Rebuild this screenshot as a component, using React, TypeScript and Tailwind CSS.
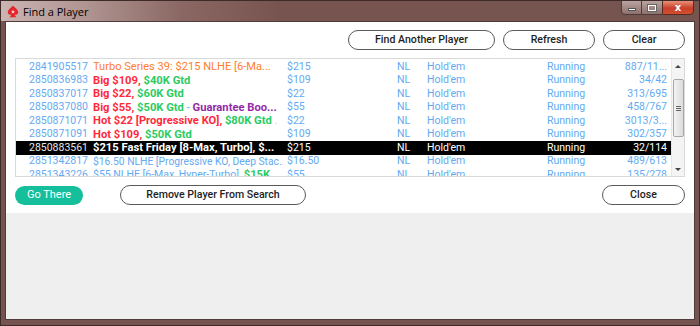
import React from "react";

type Seg = { t: string; c: string; b?: boolean; s?: string };
type Row = {
  id: string;
  name: Seg[];
  buyIn: string;
  players: string;
  selected?: boolean;
};

const BLUE = "text-[#64aaf2]";
const RED = "text-[#ff2a3c]";
const GREEN = "text-[#2bcb62]";
const ORANGE = "text-[#ff7d2e]";
const PURPLE = "text-[#9428a8]";

const rows: Row[] = [
  { id: "2841905517", name: [{ t: "Turbo Series 39: $215 NLHE [6-Ma...", c: ORANGE, s: "text-[11.1px]" }], buyIn: "$215", players: "887/11..." },
  { id: "2850836983", name: [{ t: "Big $109, ", c: RED, b: true }, { t: "$40K Gtd", c: GREEN, b: true }], buyIn: "$109", players: "34/42" },
  { id: "2850837017", name: [{ t: "Big $22, ", c: RED, b: true }, { t: "$60K Gtd", c: GREEN, b: true }], buyIn: "$22", players: "313/695" },
  {
    id: "2850837080",
    name: [
      { t: "Big $55, ", c: RED, b: true },
      { t: "$50K Gtd", c: GREEN, b: true },
      { t: " - ", c: BLUE },
      { t: "Guarantee Boo...", c: PURPLE, b: true },
    ],
    buyIn: "$55",
    players: "458/767",
  },
  {
    id: "2850871071",
    name: [
      { t: "Hot $22 [Progressive KO], ", c: RED, b: true },
      { t: "$80K Gtd", c: GREEN, b: true },
      { t: " .", c: "text-[#b8d6f6]" },
    ],
    buyIn: "$22",
    players: "3013/3...",
  },
  { id: "2850871091", name: [{ t: "Hot $109, ", c: RED, b: true }, { t: "$50K Gtd", c: GREEN, b: true }], buyIn: "$109", players: "302/357" },
  { id: "2850883561", name: [{ t: "$215 Fast Friday [8-Max, Turbo], $...", c: "text-white", b: true }], buyIn: "$215", players: "32/114", selected: true },
  { id: "2851342817", name: [{ t: "$16.50 NLHE [Progressive KO, Deep Stac...", c: BLUE, s: "text-[10.3px]" }], buyIn: "$16.50", players: "489/613" },
  {
    id: "2851343226",
    name: [
      { t: "$55 NLHE [6-Max, Hyper-Turbo], ", c: BLUE, s: "text-[10.5px]" },
      { t: "$15K", c: GREEN, b: true },
    ],
    buyIn: "$55",
    players: "135/278",
  },
];

function Pill({ label, className }: { label: string; className: string }) {
  return (
    <button
      className={
        "h-[20px] rounded-full border border-[#5a5a5a] bg-white text-[10.6px] font-medium text-[#1e1e1e] flex items-center justify-center " +
        className
      }
    >
      {label}
    </button>
  );
}

function Spade() {
  return (
    <svg width="12" height="13" viewBox="0 0 12 13">
      <path
        d="M6 0.5 C4 3 0.8 4.6 0.8 7.3 C0.8 9.2 2.6 10.2 4.2 9.4 C4 10.6 3.4 11.6 2.4 12.2 L9.6 12.2 C8.6 11.6 8 10.6 7.8 9.4 C9.4 10.2 11.2 9.2 11.2 7.3 C11.2 4.6 8 3 6 0.5 Z"
        fill="#e4262c"
      />
      <path d="M6 4.6 L6.6 6.2 L8.2 6.2 L6.9 7.1 L7.4 8.6 L6 7.7 L4.6 8.6 L5.1 7.1 L3.8 6.2 L5.4 6.2 Z" fill="#ffd5d5" />
    </svg>
  );
}

export default function App() {
  return (
    <div className="w-[700px] h-[326px] bg-[#75534f] border border-[#3d2b2a] flex flex-col overflow-hidden">
      {/* title bar */}
      <div className="h-[20px] flex items-start bg-[linear-gradient(to_right,#cbb4b2_0%,#b09592_12%,#8a6763_26%,#77544f_40%,#76544f_100%)]">
        <div className="flex items-center gap-[4px] pl-[6px] pt-[4px]">
          <Spade />
          <span className="text-[11px] text-black leading-none" style={{ fontFamily: '"Open Sans", "Noto Sans", sans-serif' }}>
            Find a Player
          </span>
        </div>
        <div className="ml-auto mr-[5px] flex h-[15px] -mt-px">
          <div className="w-[21px] h-full border border-[#4d3b39] rounded-bl-[4px] bg-[linear-gradient(#b9a3a0,#8c716d)] flex items-center justify-center">
            <div className="w-[8px] h-[3px] bg-white mt-[4px] border border-[#555]" />
          </div>
          <div className="w-[20px] h-full border-y border-[#4d3b39] bg-[linear-gradient(#b9a3a0,#8c716d)] flex items-center justify-center">
            <div className="w-[8px] h-[6px] border-[1.5px] border-white outline outline-1 outline-[#666]" />
          </div>
          <div className="w-[32px] h-full border border-[#5a2a20] rounded-br-[4px] bg-[linear-gradient(#e9907a,#c8402a_55%,#d4502e)] flex items-center justify-center text-white text-[10px] font-bold leading-none" style={{ fontFamily: '"DejaVu Sans", sans-serif' }}>
            x
          </div>
        </div>
      </div>

      {/* client */}
      <div
        className="mx-[4px] mb-[5px] flex-1 flex flex-col border border-[#4f3b39] bg-[#efefef]"
        style={{ fontFamily: 'Roboto, "Liberation Sans", sans-serif' }}
      >
        <div className="bg-white px-[9px] pt-[8px] pb-[8px]">
          <div className="flex justify-end gap-[8px]">
            <Pill label="Find Another Player" className="w-[147px]" />
            <Pill label="Refresh" className="w-[92px]" />
            <Pill label="Clear" className="w-[82px]" />
          </div>

          <div className="mt-[8px] h-[119px] border border-[#d9d9d9] flex overflow-hidden">
            <div className="flex-1 pt-[1px] overflow-hidden">
              {rows.map((r) => (
                <div
                  key={r.id}
                  className={
                    "h-[13.5px] flex items-center text-[10.5px] leading-none whitespace-nowrap " +
                    (r.selected ? "bg-black text-white" : BLUE)
                  }
                >
                  <span className={"w-[77px] shrink-0 pl-[13px] " + (r.selected ? "text-[#e6e6e6]" : "")}>{r.id}</span>
                  <span className="w-[190px] mr-[4px] shrink-0 overflow-hidden text-[11.2px]">
                    {r.name.map((s, i) => (
                      <span
                        key={i}
                        className={(r.selected ? "text-white" : s.c) + (s.b ? " font-bold" : "") + (s.s ? " " + s.s : "")}
                      >
                        {s.t}
                      </span>
                    ))}
                  </span>
                  <span className="w-[110px] shrink-0">{r.buyIn}</span>
                  <span className="w-[30px] shrink-0">NL</span>
                  <span className="w-[120px] shrink-0">Hold'em</span>
                  <span className="w-[70px] shrink-0">Running</span>
                  <span className="w-[50px] shrink-0 text-right">{r.players}</span>
                </div>
              ))}
            </div>
            {/* scrollbar */}
            <div className="w-[13px] bg-[#f4f4f4] border-l border-[#e6e6e6] flex flex-col items-center">
              <div className="h-[14px] flex items-center justify-center">
                <div className="w-0 h-0 border-x-[3px] border-x-transparent border-b-[3px] border-b-[#444]" />
              </div>
              <div className="w-[11px] h-[58px] mt-[6px] rounded-[2px] border border-[#a8a8a8] bg-[linear-gradient(to_right,#f2f2f2,#dcdcdc)] flex flex-col items-center justify-center gap-[1px]">
                <div className="w-[5px] h-px bg-[#666]" />
                <div className="w-[5px] h-px bg-[#666]" />
                <div className="w-[5px] h-px bg-[#666]" />
              </div>
              <div className="mt-auto h-[14px] flex items-center justify-center">
                <div className="w-0 h-0 border-x-[3px] border-x-transparent border-t-[3px] border-t-[#444]" />
              </div>
            </div>
          </div>

          <div className="mt-[8px] flex items-center">
            <button className="w-[68px] h-[19px] rounded-full bg-[#15bf9c] text-white text-[11px]">
              Go There
            </button>
            <Pill label="Remove Player From Search" className="ml-[37px] w-[186px] h-[19px]" />
            <Pill label="Close" className="ml-auto w-[83px] h-[19px]" />
          </div>
        </div>
      </div>
    </div>
  );
}
